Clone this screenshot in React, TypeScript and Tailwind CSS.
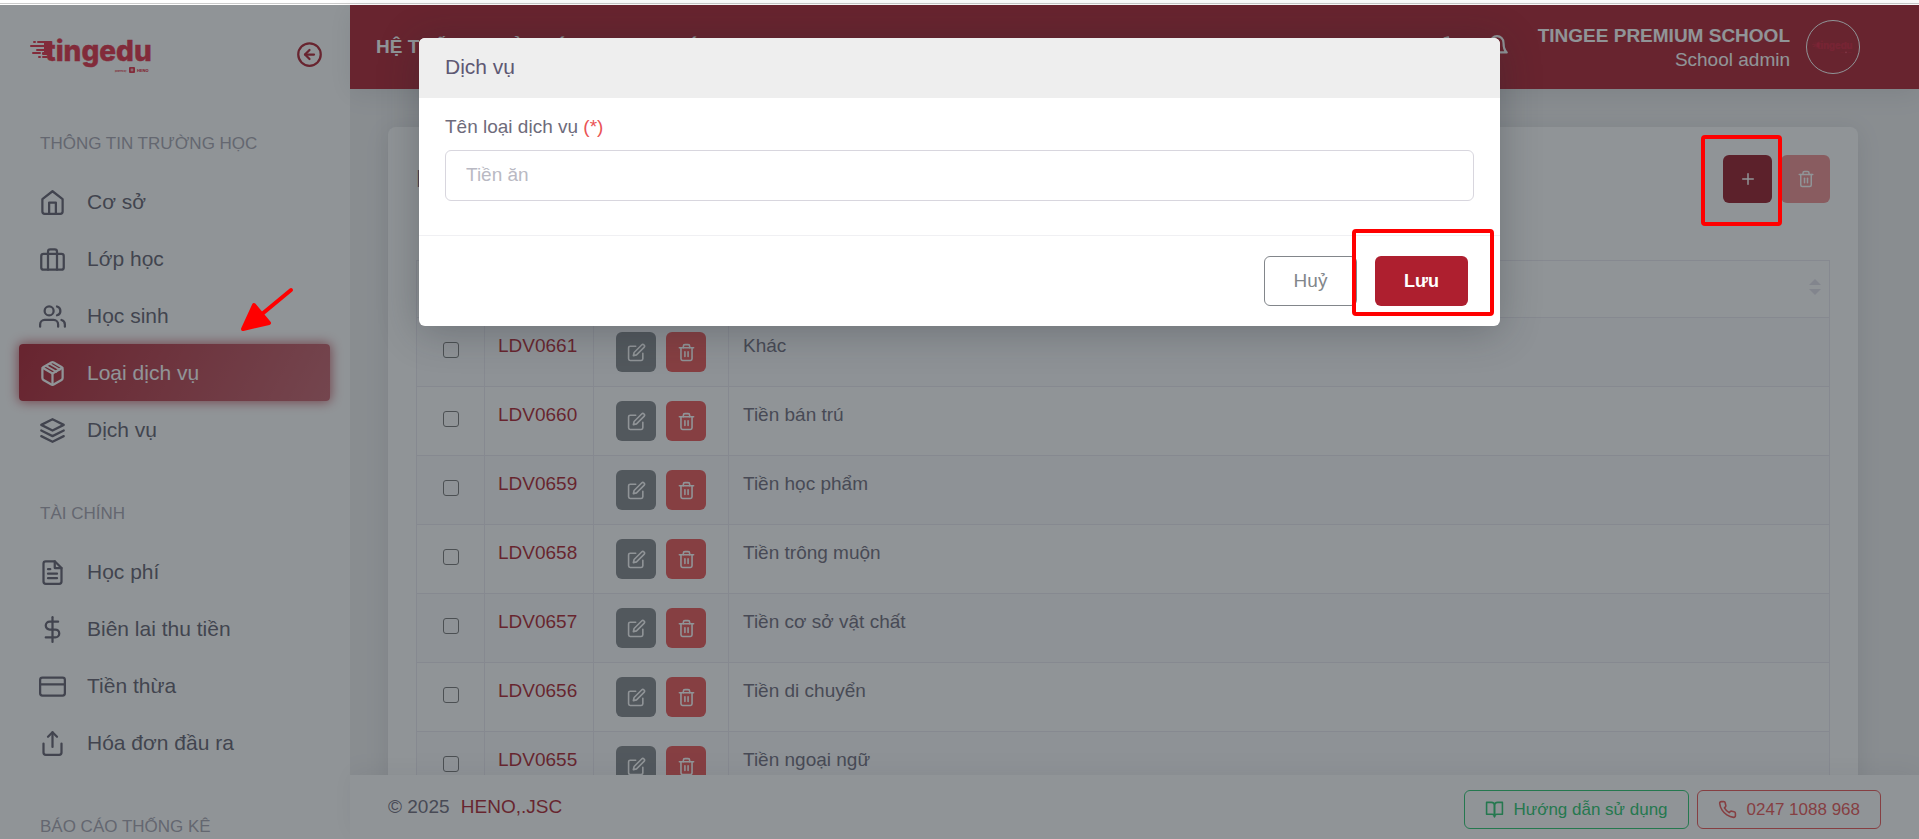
import type { IconType } from "react-icons";
import {
  FiArrowLeftCircle,
  FiBell,
  FiBookOpen,
  FiBriefcase,
  FiCreditCard,
  FiDollarSign,
  FiEdit,
  FiFileText,
  FiHome,
  FiLayers,
  FiMoon,
  FiPhone,
  FiPlus,
  FiShare,
  FiTrash2,
  FiUsers,
} from "react-icons/fi";

const BoxIcon: IconType = ({ size = 24, className }) => (
  <svg
    viewBox="0 0 24 24"
    width={size}
    height={size}
    className={className}
    fill="none"
    stroke="currentColor"
    strokeWidth="2"
    strokeLinecap="round"
    strokeLinejoin="round"
  >
    <path d="M21 16V8a2 2 0 0 0-1-1.73l-7-4a2 2 0 0 0-2 0l-7 4A2 2 0 0 0 3 8v8a2 2 0 0 0 1 1.73l7 4a2 2 0 0 0 2 0l7-4A2 2 0 0 0 21 16z" />
    <path d="M3.27 6.96L12 12.01l8.73-5.05" />
    <path d="M12 22.08V12" />
    <path d="M6.2 5.2l9.2 5.2" strokeWidth="1.6" />
    <path d="M9.4 3.4l9.2 5.2" strokeWidth="1.6" />
  </svg>
);

type NavItem = { label: string; icon: IconType; active?: boolean };
type NavGroup = { title: string; items: NavItem[] };

const navGroups: NavGroup[] = [
  {
    title: "THÔNG TIN TRƯỜNG HỌC",
    items: [
      { label: "Cơ sở", icon: FiHome },
      { label: "Lớp học", icon: FiBriefcase },
      { label: "Học sinh", icon: FiUsers },
      { label: "Loại dịch vụ", icon: BoxIcon, active: true },
      { label: "Dịch vụ", icon: FiLayers },
    ],
  },
  {
    title: "TÀI CHÍNH",
    items: [
      { label: "Học phí", icon: FiFileText },
      { label: "Biên lai thu tiền", icon: FiDollarSign },
      { label: "Tiền thừa", icon: FiCreditCard },
      { label: "Hóa đơn đầu ra", icon: FiShare },
    ],
  },
  { title: "BÁO CÁO THỐNG KÊ", items: [] },
];

const services = [
  { code: "LDV0661", name: "Khác" },
  { code: "LDV0660", name: "Tiền bán trú" },
  { code: "LDV0659", name: "Tiền học phẩm" },
  { code: "LDV0658", name: "Tiền trông muộn" },
  { code: "LDV0657", name: "Tiền cơ sở vật chất" },
  { code: "LDV0656", name: "Tiền di chuyển" },
  { code: "LDV0655", name: "Tiền ngoại ngữ" },
];

const Logo = ({ className }: { className: string }) => (
  <svg viewBox="0 -4 126 44" className={className} fill="currentColor" aria-label="tingedu">
    <g>
      <rect x="3" y="4" width="3" height="2" rx="1" />
      <rect x="7" y="4" width="14" height="2" rx="1" />
      <rect x="0" y="8" width="20" height="2" rx="1" />
      <rect x="6" y="12" width="14" height="2" rx="1" />
      <rect x="2" y="15" width="9" height="2" rx="1" />
      <rect x="12" y="15" width="8" height="3" rx="1" />
      <rect x="8" y="19" width="3" height="2" rx="1" />
      <rect x="12" y="19" width="6" height="2" rx="1" />
      <rect x="14" y="4" width="8" height="14" rx="1" />
    </g>
    <text
      x="15"
      y="24"
      fontFamily="Inter, sans-serif"
      fontWeight="800"
      fontSize="28"
      stroke="currentColor"
      strokeWidth="0.4"
    >
      tingedu
    </text>
    <text x="85" y="35" fontFamily="Inter, sans-serif" fontWeight="700" fontSize="2">
      powered by
    </text>
    <rect x="99" y="30" width="6" height="6" rx="1" />
    <circle cx="102" cy="33" r="1.4" fill="#fff" fillOpacity="0.6" />
    <text x="107" y="35" fontFamily="Inter, sans-serif" fontWeight="800" fontSize="4">
      HENO
    </text>
  </svg>
);

const Sidebar = () => (
  <aside className="w-[350px] shrink-0 bg-white overflow-hidden">
    <div className="h-[83px] flex items-center justify-between pt-4 pl-[30px] pr-[27px]">
      <a href="#home">
        <Logo className="w-[126px] text-[#e22d44]" />
      </a>
      <button type="button" aria-label="Thu gọn menu" className="text-[#ae1f2f]">
        <FiArrowLeftCircle size={27} />
      </button>
    </div>
    <nav className="pl-[19px] pr-5">
      {navGroups.map((group) => (
        <div key={group.title} className="pt-[43px]">
          <h2 className="pl-[21px] mb-[17px] text-[17px] leading-[25px] text-[#a6a4b0] whitespace-nowrap">
            {group.title}
          </h2>
          {group.items.map(({ label, icon: Icon, active }) => (
            <a
              key={label}
              href="#nav"
              className={
                active
                  ? "h-[57px] flex items-center gap-[21px] pl-5 rounded text-[21px] text-white bg-[linear-gradient(118deg,#ae1f2f,rgba(174,31,47,0.7))] shadow-[0_0_12px_1px_rgba(174,31,47,0.7)]"
                  : "h-[57px] flex items-center gap-[21px] pl-5 text-[21px] text-[#625f6e]"
              }
            >
              <Icon size={27} className="mt-0.5" />
              <span>{label}</span>
            </a>
          ))}
        </div>
      ))}
    </nav>
  </aside>
);

const Header = () => (
  <header className="relative z-10 h-[84px] shrink-0 flex items-center justify-between pl-[26px] pr-[59px] bg-[#ae1f2f] text-white text-[19px] shadow-[0_4px_24px_rgba(34,41,47,0.1)]">
    <h1 className="font-bold">HỆ THỐNG QUẢN LÝ THU HỌC PHÍ</h1>
    <div className="flex items-center">
      <button type="button" aria-label="Chế độ tối" className="mr-[22px]">
        <FiMoon size={26} />
      </button>
      <button type="button" aria-label="Thông báo" className="mr-7">
        <FiBell size={26} />
      </button>
      <div className="text-right leading-6 mr-4 pt-0.5">
        <p className="font-bold">TINGEE PREMIUM SCHOOL</p>
        <p>School admin</p>
      </div>
      <div className="size-[54px] rounded-full border border-white flex items-center justify-center">
        <Logo className="w-[42px] text-[#e0203f]/60" />
      </div>
    </div>
  </header>
);

const ServiceTable = () => (
  <table className="w-full table-fixed border-collapse text-[19px] leading-7 text-[#6e6b7b]">
    <colgroup>
      <col className="w-[68px]" />
      <col className="w-[109px]" />
      <col className="w-[135px]" />
      <col />
    </colgroup>
    <thead>
      <tr className="h-[57px]">
        <th className="border border-[#ebe9f1]">
          <input
            type="checkbox"
            aria-label="Chọn tất cả"
            className="block mx-auto size-4 appearance-none rounded-[3px] border border-[#767676]"
          />
        </th>
        <th className="border border-[#ebe9f1] px-3.5 text-left">Mã</th>
        <th className="border border-[#ebe9f1] px-3.5 text-left">Thao tác</th>
        <th className="border border-[#ebe9f1] px-3.5 pb-1">
          <div className="flex items-center justify-between">
            <span>Tên loại dịch vụ</span>
            <svg viewBox="0 0 12 16" className="w-3 h-4 mr-[-6px]" fill="#e2e0ea">
              <path d="M6 0l6 6H0z" />
              <path d="M6 16l6-6H0z" />
            </svg>
          </div>
        </th>
      </tr>
    </thead>
    <tbody>
      {services.map(({ code, name }) => (
        <tr key={code} className="odd:bg-[#fafafc]">
          <td className="border border-[#ebe9f1] pb-1">
            <input
              type="checkbox"
              aria-label={code}
              className="block mx-auto size-4 appearance-none rounded-[3px] border border-[#767676]"
            />
          </td>
          <td className="border border-[#ebe9f1] py-3.5 px-[13px] align-top">
            <a href="#detail" className="text-[#ae1f2f]">
              {code}
            </a>
          </td>
          <td className="border border-[#ebe9f1] py-3.5 align-top">
            <div className="flex justify-center gap-2.5">
              <button
                type="button"
                aria-label={`Sửa ${code}`}
                className="size-10 rounded-md bg-[#82868b] text-white flex items-center justify-center"
              >
                <FiEdit size={19} />
              </button>
              <button
                type="button"
                aria-label={`Xoá ${code}`}
                className="size-10 rounded-md bg-[#ea5455] text-white flex items-center justify-center"
              >
                <FiTrash2 size={19} />
              </button>
            </div>
          </td>
          <td className="border border-[#ebe9f1] py-3.5 px-3.5 align-top">{name}</td>
        </tr>
      ))}
    </tbody>
  </table>
);

const Footer = () => (
  <footer className="relative z-10 h-16 shrink-0 flex items-center justify-between px-[38px] bg-white text-[19px] text-[#6e6b7b] shadow-[0_-4px_24px_rgba(34,41,47,0.06)]">
    <p className="pt-px">
      © 2025{" "}
      <a href="#heno" className="ml-1.5 text-[#ae1f2f]">
        HENO,.JSC
      </a>
    </p>
    <div className="flex gap-2 text-[17px] pt-1">
      <a
        href="#guide"
        className="h-[39px] flex items-center gap-2.5 px-5 rounded-md border border-[#28c76f] text-[#28c76f]"
      >
        <FiBookOpen size={19} />
        <span className="pt-0.5">Hướng dẫn sử dụng</span>
      </a>
      <a
        href="#phone"
        className="h-[39px] flex items-center gap-2.5 px-5 rounded-md border border-[#ea5455] text-[#ea5455]"
      >
        <FiPhone size={19} />
        <span className="pt-0.5">0247 1088 968</span>
      </a>
    </div>
  </footer>
);

const ServiceModal = () => (
  <div
    role="dialog"
    aria-labelledby="modal-title"
    className="w-full max-w-[1081px] rounded-md bg-white text-[19px] shadow-[0_5px_40px_rgba(34,41,47,0.3)]"
  >
    <div className="h-[60px] flex items-center px-[26px] pb-0.5 rounded-t-md bg-[#eeeeee]">
      <h2 id="modal-title" className="text-[21px] text-[#5e5873]">
        Dịch vụ
      </h2>
    </div>
    <div className="px-[26px] pt-[15px] pb-[34px]">
      <label htmlFor="service-name" className="block leading-7 mb-[9px] text-[#6e6b7b]">
        Tên loại dịch vụ <span className="text-[#ea5455]">(*)</span>
      </label>
      <input
        id="service-name"
        type="text"
        placeholder="Tiền ăn"
        className="block w-full h-[51px] px-5 pb-0.5 rounded-md border border-[#d8d6de] placeholder:text-[#b9b9c3]"
      />
    </div>
    <div className="flex justify-end gap-[18px] pt-5 pb-5 pr-8 border-t border-[#f0f0f3]">
      <button
        type="button"
        className="h-[50px] w-[93px] rounded-md border border-[#82868b] text-[#82868b]"
      >
        Huỷ
      </button>
      <div className="relative">
        <button
          type="button"
          className="h-[50px] w-[93px] rounded-md bg-[#ae1f2f] text-lg font-bold text-white"
        >
          Lưu
        </button>
        <div className="absolute -left-[23px] -right-[26px] -top-[27px] -bottom-2.5 border-4 border-[#ff0000] rounded-sm pointer-events-none" />
      </div>
    </div>
  </div>
);

const App = () => {
  return (
    <div className="h-screen overflow-hidden flex flex-col bg-white font-['Liberation_Sans',Arial,sans-serif]">
      <div className="h-[5px] shrink-0 flex flex-col justify-end pb-px">
        <div className="h-px bg-[#cccccc]" />
      </div>
      <div className="relative flex-1 min-h-0 flex">
        <Sidebar />
        <div className="flex-1 min-w-0 flex flex-col bg-[#f0f0f1]">
          <Header />
          <main className="flex-1 min-h-0 overflow-hidden pt-[38px] pl-[38px] pr-[61px]">
            <section className="p-7 rounded-lg bg-white shadow-[0_4px_24px_rgba(34,41,47,0.1)]">
              <div className="flex items-center justify-between mb-[57px]">
                <h2 className="text-2xl text-[#5e5873]">Danh sách loại dịch vụ</h2>
                <div className="flex gap-[9px]">
                  <button
                    type="button"
                    aria-label="Thêm mới"
                    className="w-[49px] h-12 rounded-md bg-[#961927] text-white flex items-center justify-center"
                  >
                    <FiPlus size={18} />
                  </button>
                  <button
                    type="button"
                    aria-label="Xoá đã chọn"
                    className="w-[49px] h-12 rounded-md bg-[#ea5455] opacity-65 text-white flex items-center justify-center"
                  >
                    <FiTrash2 size={18} />
                  </button>
                </div>
              </div>
              <ServiceTable />
            </section>
          </main>
          <Footer />
        </div>

        {/* backdrop and dialog */}
        <div className="absolute inset-0 z-20 flex items-start justify-center pt-[33px] bg-[#22292f]/50">
          <ServiceModal />
        </div>

        {/* guide marks */}
        <div className="absolute z-30 right-[137px] top-[130px] w-[81px] h-[91px] border-4 border-[#ff0000] rounded-sm pointer-events-none" />
        <svg
          viewBox="0 0 54 46"
          className="absolute z-30 left-[240px] top-[282px] w-[54px] h-[46px] pointer-events-none"
          fill="#ff0000"
          stroke="#ff0000"
          strokeLinejoin="round"
          strokeLinecap="round"
        >
          <path d="M51 3L22 27" strokeWidth="4" />
          <path d="M3 42L14 18L29 36z" strokeWidth="4" />
        </svg>
      </div>
    </div>
  );
};

export default App;
